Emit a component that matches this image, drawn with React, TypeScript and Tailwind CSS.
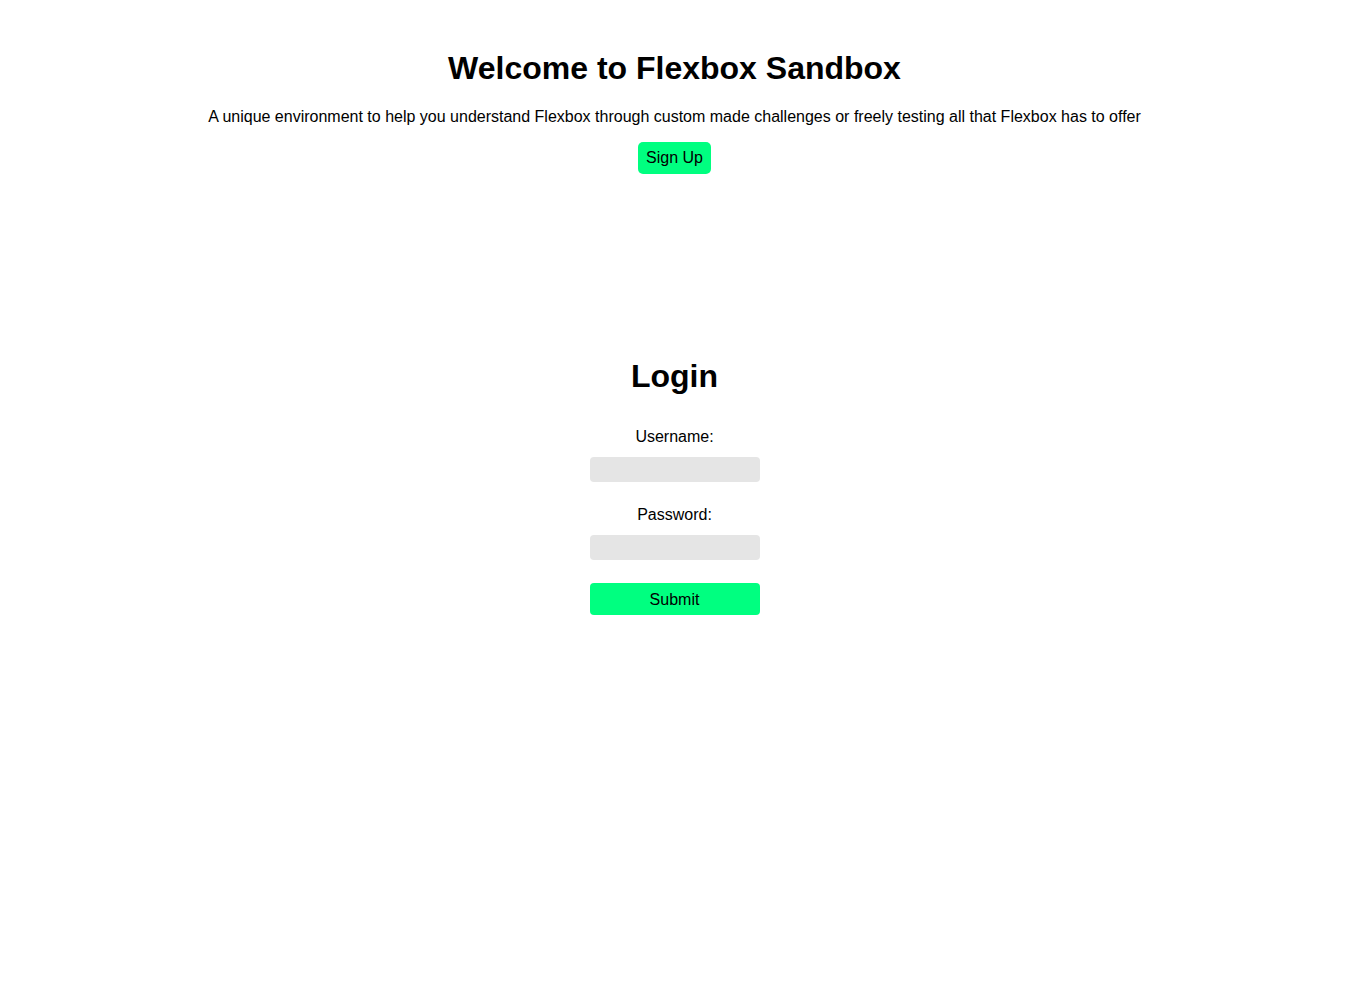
import React from "react";

export default function App() {
  return (
    <div className="min-h-screen bg-white text-black flex flex-col items-center" style={{ fontFamily: '"Liberation Sans", Arial, sans-serif' }}>
      <h1 className="mt-[50px] text-[32px] leading-[37px] font-bold">Welcome to Flexbox Sandbox</h1>
      <p className="mt-[21px] text-base leading-[18px]">
        A unique environment to help you understand Flexbox through custom made challenges or freely testing all that Flexbox has to offer
      </p>
      <button className="mt-[16px] h-8 px-2 rounded-[5px] bg-[#00ff80] text-base leading-[18px]">Sign Up</button>

      <h1 className="mt-[184px] text-[32px] leading-[37px] font-bold">Login</h1>
      <form className="flex flex-col items-center" onSubmit={(e) => e.preventDefault()}>
        <label className="mt-[33px] text-base leading-[18px]">Username:</label>
        <input type="text" className="mt-[11px] h-[25px] w-[170px] rounded-[4px] bg-[#e5e5e5] outline-none" />
        <label className="mt-[24px] text-base leading-[18px]">Password:</label>
        <input type="password" className="mt-[11px] h-[25px] w-[170px] rounded-[4px] bg-[#e5e5e5] outline-none" />
        <button type="submit" className="mt-[23px] h-8 w-[170px] pt-[2px] rounded-[4px] bg-[#00ff80] text-base leading-[18px]">Submit</button>
      </form>
    </div>
  );
}
